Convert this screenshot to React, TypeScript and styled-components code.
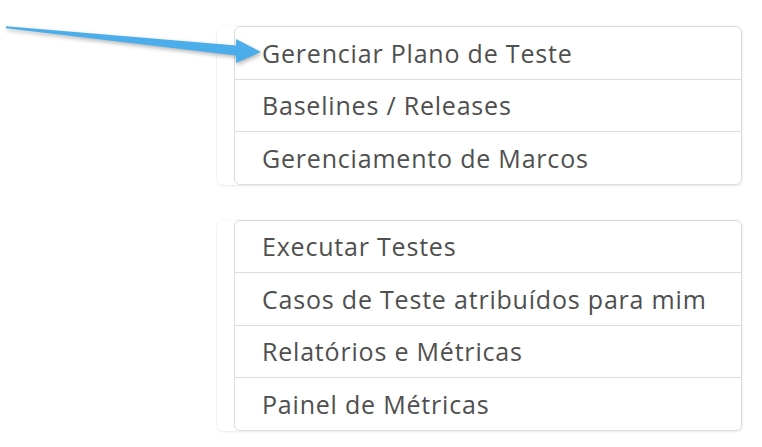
import React from "react";
import styled, { createGlobalStyle } from "styled-components";

const Global = createGlobalStyle`
  html, body { margin: 0; padding: 0; background: #ffffff; }
  body { font-family: "Open Sans", "DejaVu Sans", sans-serif; }
`;

const Page = styled.div`
  position: relative;
  width: 762px;
  height: 447px;
  overflow: hidden;
  box-sizing: border-box;
  padding: 26px 20px 0 217px;
  display: flex;
  flex-direction: column;
  gap: 35px;
`;

const Card = styled.div`
  width: 525px;
  border-radius: 6px;
  background: #fff;
  box-shadow: 0 1px 3px rgba(0, 0, 0, 0.07), 0 0 0 1px rgba(0, 0, 0, 0.02);
  display: flex;
  justify-content: flex-end;
`;

const List = styled.ul`
  list-style: none;
  margin: 0;
  padding: 0;
  width: 508px;
  box-sizing: border-box;
  border: 1px solid #dcdcdc;
  border-radius: 6px;
  background: #fff;
`;

const Item = styled.li`
  height: 51.5px;
  display: flex;
  align-items: center;
  padding-left: 27px;
  font-size: 25px;
  letter-spacing: 0.8px;
  color: #4f4f4f;
  white-space: nowrap;
  & + & {
    border-top: 1px solid #dcdcdc;
  }
`;

const Arrow = styled.svg`
  position: absolute;
  left: 0;
  top: 0;
  overflow: visible;
  filter: drop-shadow(1px 2px 2px rgba(0, 0, 0, 0.3));
`;

const groups = [
  ["Gerenciar Plano de Teste", "Baselines / Releases", "Gerenciamento de Marcos"],
  [
    "Executar Testes",
    "Casos de Teste atribuídos para mim",
    "Relatórios e Métricas",
    "Painel de Métricas",
  ],
];

export default function App() {
  return (
    <>
      <Global />
      <Page>
        {groups.map((g, i) => (
          <Card key={i}>
            <List>
              {g.map((t) => (
                <Item key={t}>{t}</Item>
              ))}
            </List>
          </Card>
        ))}
        <Arrow width="270" height="70" viewBox="0 0 270 70">
          <polygon
            points="6,26.3 236,45.5 236,39 261,52 236,63 236,55.5 6,28.2"
            fill="#4badea"
          />
        </Arrow>
      </Page>
    </>
  );
}
